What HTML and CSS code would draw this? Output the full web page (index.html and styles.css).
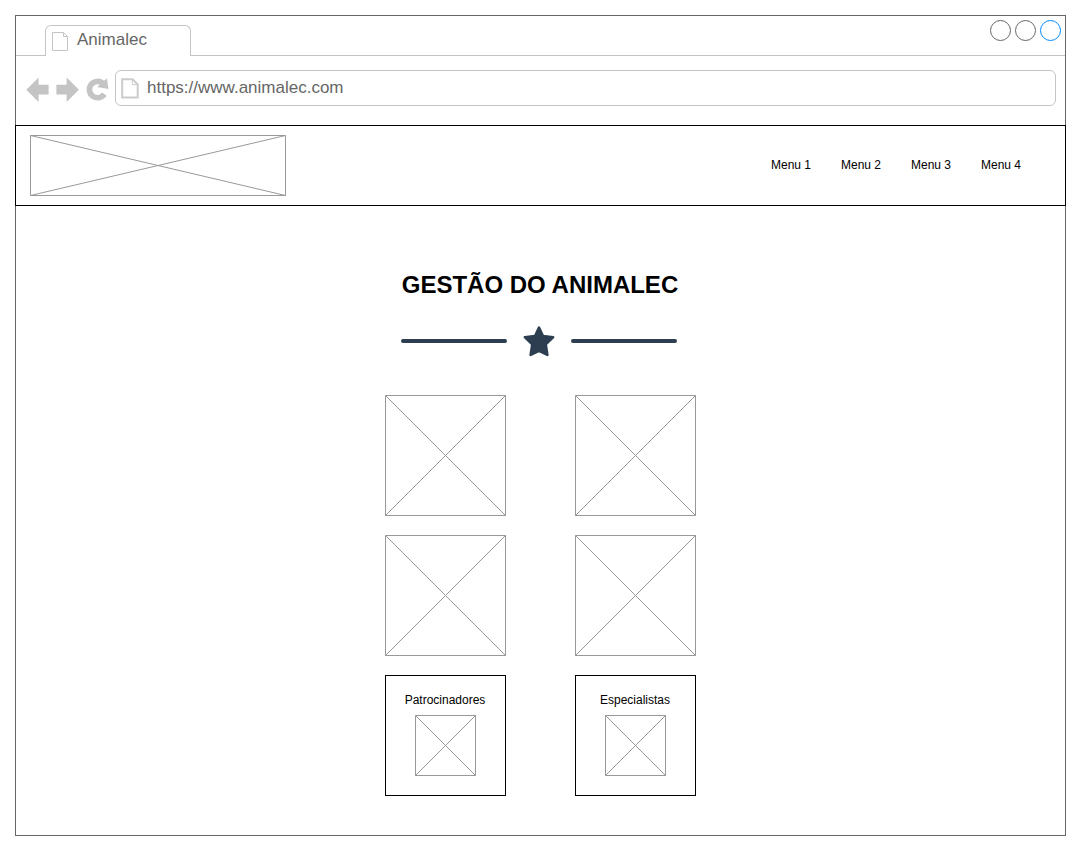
FILE: index.html
```html
<!DOCTYPE html>
<html lang="pt">
<head>
  <meta charset="utf-8">
  <title>Animalec</title>
  <link rel="stylesheet" href="styles.css">
</head>
<body>
  <div class="window">
    <div class="tab-strip">
      <div class="strip-start"></div>
      <div class="tab">
        <svg class="tab-icon" width="17" height="20" viewBox="0 0 17 20"><path d="M.5.5H11.5L15.5 4.5V18.5H.5Z M11.5.8V4.5H15.5"/></svg>
        <span>Animalec</span>
      </div>
      <div class="strip-end">
        <i class="control"></i>
        <i class="control"></i>
        <i class="control control-active"></i>
      </div>
    </div>

    <div class="toolbar">
      <svg class="nav-icon" width="24" height="26" viewBox="0 0 24 26"><path d="M.3 12.7 12.6.5V7.7H22.6V17.6H12.6V24.9Z"/></svg>
      <svg class="nav-icon" width="24" height="26" viewBox="0 0 24 26"><path d="M22.9 12.7 10.6.5V7.7H.4V17.6H10.6V24.9Z"/></svg>
      <svg class="nav-icon reload" width="23" height="26" viewBox="0 0 23 26"><path class="arc" d="M18.4 17.2A8.2 8.2 0 1 1 16.8 6.2"/><path d="M20.9 1.2 22.5 12 11.2 10Z"/></svg>
      <div class="address">
        <svg class="page-icon" width="18" height="21" viewBox="0 0 18 21"><path d="M1.2 1.3H11.6L16.7 6.3V19.4H1.2Z"/><path class="fold" d="M11.4 1V6.6H16.6"/></svg>
        <span>https://www.animalec.com</span>
      </div>
    </div>

    <header class="site-header">
      <svg class="placeholder" width="257" height="61" viewBox="0 0 257 61"><path d="M.5.5H255.5V60.5H.5ZL255.5 60.5M255.5.5.5 60.5"/></svg>
      <nav class="menu">
        <a>Menu 1</a>
        <a>Menu 2</a>
        <a>Menu 3</a>
        <a>Menu 4</a>
      </nav>
    </header>

    <main>
      <h1>GESTÃO DO ANIMALEC</h1>
      <div class="divider">
        <span class="rule"></span>
        <svg class="star" width="34" height="34" viewBox="0 0 34 34"><path d="M17 3.6 21 12 31.2 13.2 23.8 20.4 25.4 31 17 26.8 8.6 31 10.2 20.4 2.8 13.2 13 12Z"/></svg>
        <span class="rule"></span>
      </div>
      <div class="grid">
        <svg class="placeholder" width="121" height="121" viewBox="0 0 121 121"><path d="M.5.5H120.5V120.5H.5ZL120.5 120.5M120.5.5.5 120.5"/></svg>
        <svg class="placeholder" width="121" height="121" viewBox="0 0 121 121"><path d="M.5.5H120.5V120.5H.5ZL120.5 120.5M120.5.5.5 120.5"/></svg>
        <svg class="placeholder" width="121" height="121" viewBox="0 0 121 121"><path d="M.5.5H120.5V120.5H.5ZL120.5 120.5M120.5.5.5 120.5"/></svg>
        <svg class="placeholder" width="121" height="121" viewBox="0 0 121 121"><path d="M.5.5H120.5V120.5H.5ZL120.5 120.5M120.5.5.5 120.5"/></svg>
        <section class="card">
          <span>Patrocinadores</span>
          <svg class="placeholder" width="61" height="61" viewBox="0 0 61 61"><path d="M.5.5H60.5V60.5H.5ZL60.5 60.5M60.5.5.5 60.5"/></svg>
        </section>
        <section class="card">
          <span>Especialistas</span>
          <svg class="placeholder" width="61" height="61" viewBox="0 0 61 61"><path d="M.5.5H60.5V60.5H.5ZL60.5 60.5M60.5.5.5 60.5"/></svg>
        </section>
      </div>
    </main>
  </div>
</body>
</html>
```
FILE: styles.css
```css
* {
  box-sizing: border-box;
}

body {
  margin: 0;
  padding: 15px;
  background: #fff;
  font-family: "Liberation Sans", Arial, sans-serif;
  font-size: 12px;
  color: #000;
}

svg {
  display: block;
  flex: none;
  fill: none;
}

.window {
  width: 1051px;
  height: 821px;
  border: 1px solid #666;
}

.tab-strip {
  display: flex;
  align-items: flex-end;
  height: 40px;
}

.strip-start {
  width: 29px;
  height: 40px;
  border-bottom: 1px solid #c4c4c4;
}

.tab {
  display: flex;
  gap: 8px;
  width: 146px;
  height: 31px;
  padding: 6px 0 0 6px;
  border: 1px solid #c4c4c4;
  border-bottom: 0;
  border-radius: 6px 6px 0 0;
  font-size: 17px;
  line-height: 16px;
  color: #666;
}

.tab-icon {
  stroke: #c4c4c4;
}

.strip-end {
  display: flex;
  flex: 1;
  justify-content: flex-end;
  gap: 4px;
  height: 40px;
  padding: 4px 4px 0 0;
  border-bottom: 1px solid #c4c4c4;
}

.control {
  width: 21px;
  height: 21px;
  border: 1px solid #666;
  border-radius: 50%;
}

.control-active {
  border-color: #008cff;
}

.toolbar {
  display: flex;
  height: 69px;
  padding: 14px 9px 0 10px;
}

.nav-icon {
  margin: 7px 6px 0 0;
  fill: #c4c4c4;
}

.arc {
  fill: none;
  stroke: #c4c4c4;
  stroke-width: 5.6;
}

.address {
  display: flex;
  flex: 1;
  gap: 8px;
  height: 36px;
  padding: 7px 0 0 5px;
  border: 1px solid #c4c4c4;
  border-radius: 6px;
  font-size: 17px;
  line-height: 19px;
  color: #666;
}

.page-icon {
  stroke: #ccc;
  stroke-width: 2;
}

.fold {
  stroke-width: 1;
}

.site-header {
  display: flex;
  justify-content: space-between;
  height: 81px;
  margin: 0 -1px;
  padding: 9px 44px 0 14px;
  border: 1px solid #000;
}

.placeholder {
  stroke: #999;
}

.menu {
  display: flex;
  gap: 30px;
  padding-top: 22px;
  line-height: 16px;
}

.menu a {
  width: 40px;
  white-space: nowrap;
}

main {
  display: flex;
  flex-direction: column;
  align-items: center;
  padding-top: 65px;
}

h1 {
  margin: 0;
  padding-right: 1px;
  font-size: 24px;
  line-height: 28px;
}

.divider {
  display: flex;
  align-items: center;
  gap: 15px;
  width: 279px;
  height: 34px;
  margin-top: 25px;
}

.rule {
  width: 106px;
  height: 4px;
  border-radius: 2px;
  background: #2c3e50;
}

.star {
  width: 34px;
  fill: #2c3e50;
  stroke: #2c3e50;
  stroke-width: 2.5;
  stroke-linejoin: round;
}

.grid {
  display: grid;
  grid-template-columns: 121px 121px;
  gap: 19px 69px;
  margin-top: 37px;
}

.card {
  display: flex;
  flex-direction: column;
  align-items: center;
  height: 121px;
  padding-top: 16px;
  border: 1px solid #000;
  line-height: 16px;
}

.card span {
  padding-right: 1px;
}

.card .placeholder {
  margin-top: 7px;
}
```
